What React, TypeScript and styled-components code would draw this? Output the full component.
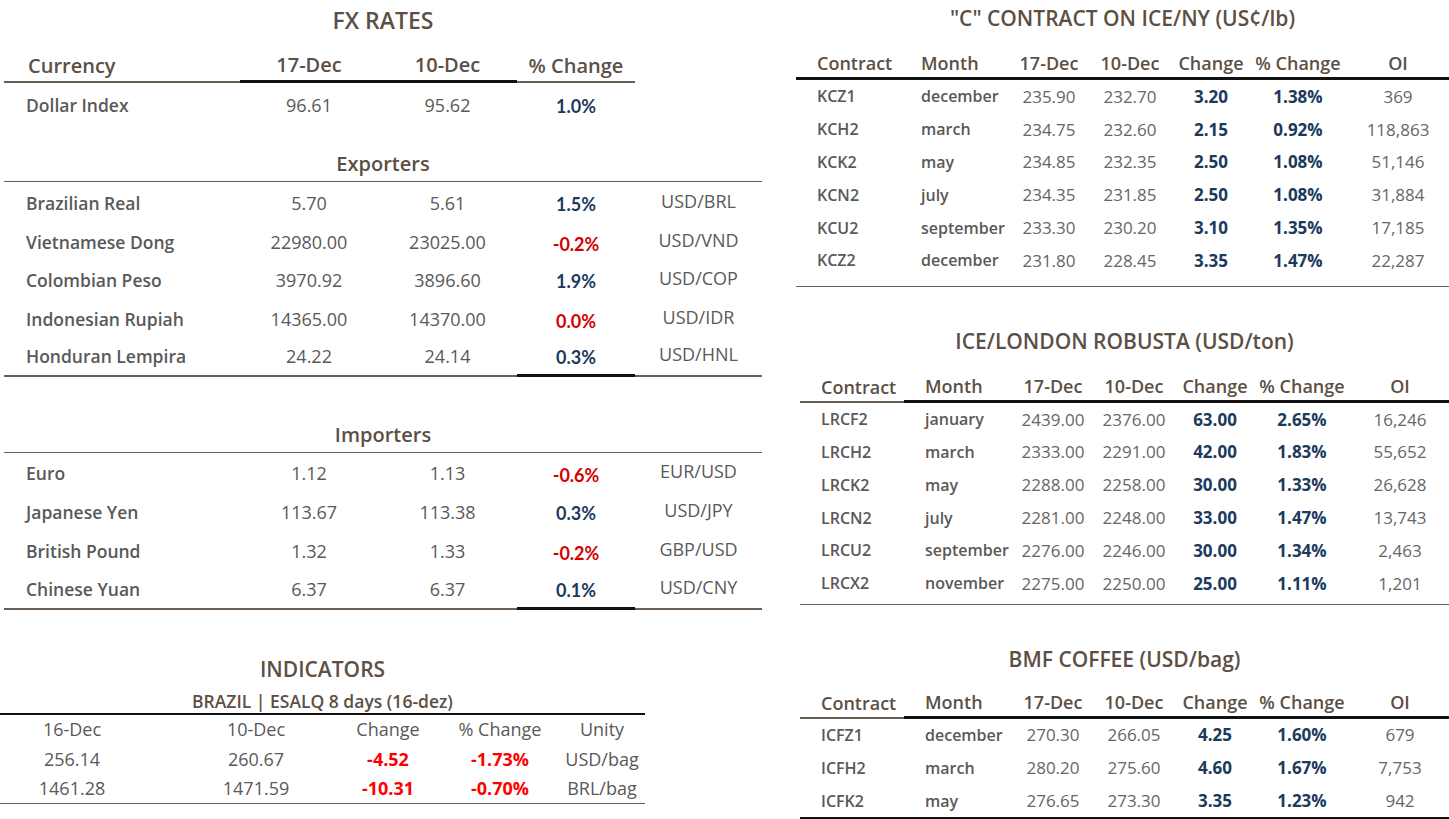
import React from 'react';
import styled, { createGlobalStyle } from 'styled-components';

const BROWN = '#5c4f45';
const RULE = '#6b5e53';
const INK = '#595959';
const SOFT = '#666666';
const BLUE = '#1b3a5c';
const RED = '#d40000';
const HOT = '#ff0000';

const GlobalStyle = createGlobalStyle`
  html, body {
    margin: 0;
    padding: 0;
    background: #ffffff;
  }
  body {
    font-family: 'Open Sans', 'Liberation Sans', sans-serif;
    color: ${INK};
    overflow: hidden;
  }
`;

const Page = styled.div`
  display: grid;
  grid-template-columns: 766px 653px;
  column-gap: 30px;
  align-items: start;
  width: 1449px;
  height: 819px;
`;

const Column = styled.div`
  display: flex;
  flex-direction: column;
`;

/* ---------- FX RATES ---------- */

const FxBlock = styled.section`
  width: 758px;
  margin: 0 4px;
  display: flex;
  flex-direction: column;
`;

const BigTitle = styled.h2<{ $h: number; $size?: number }>`
  margin: 0;
  height: ${p => p.$h}px;
  line-height: ${p => p.$h}px;
  text-align: center;
  font-size: ${p => p.$size ?? 23}px;
  font-weight: 600;
  color: ${BROWN};
  white-space: nowrap;
`;

const FX_COLS = '236px 138px 139px 118px 127px';

const FxHead = styled.div`
  display: grid;
  grid-template-columns: ${FX_COLS};
  height: 43px;
`;

const FxHeadCell = styled.div<{ $rule: string; $w: number; $left?: boolean }>`
  display: flex;
  align-items: flex-end;
  justify-content: ${p => (p.$left ? 'flex-start' : 'center')};
  padding: 0 0 2px ${p => (p.$left ? '24px' : '0')};
  border-bottom: ${p => p.$w}px solid ${p => p.$rule};
  font-size: 20px;
  font-weight: 600;
  line-height: 26px;
  color: ${BROWN};
  white-space: nowrap;
`;

const SectionTitle = styled.h3<{ $gap: number }>`
  margin: ${p => p.$gap}px 0 0;
  height: 33px;
  box-sizing: border-box;
  line-height: 30px;
  text-align: center;
  font-size: 20px;
  font-weight: 600;
  color: ${BROWN};
  border-bottom: 1px solid ${RULE};
`;

const FxRows = styled.div<{ $top: number }>`
  padding-top: ${p => p.$top}px;
  display: flex;
  flex-direction: column;
`;

const FxRow = styled.div<{ $h: number }>`
  display: grid;
  grid-template-columns: ${FX_COLS};
  height: ${p => p.$h}px;
`;

const FxCell = styled.div<{ $rule?: string; $w?: number }>`
  display: flex;
  align-items: center;
  justify-content: center;
  box-sizing: border-box;
  border-bottom: ${p => (p.$rule ? `${p.$w ?? 2}px solid ${p.$rule}` : 'none')};
  white-space: nowrap;
`;

const FxName = styled(FxCell)`
  justify-content: flex-start;
  padding-left: 22px;
  font-size: 17.5px;
  font-weight: 600;
  color: ${INK};
`;

const FxNum = styled(FxCell)`
  font-size: 18px;
  font-weight: 400;
  color: ${INK};
`;

const FxPct = styled(FxCell)<{ $down?: boolean }>`
  font-family: Lato, 'Open Sans', sans-serif;
  font-size: 18px;
  font-weight: 700;
  color: ${p => (p.$down ? RED : BLUE)};
  padding-top: ${p => (p.$down ? '4px' : '2px')};
`;

const FxPair = styled(FxCell)`
  font-size: 18px;
  font-weight: 400;
  color: ${INK};
  padding-bottom: 4px;
`;

type FxItem = { name: string; now: string; prev: string; pct: string; down?: boolean; pair?: string };

const exporters: FxItem[] = [
  { name: 'Brazilian Real', now: '5.70', prev: '5.61', pct: '1.5%', pair: 'USD/BRL' },
  { name: 'Vietnamese Dong', now: '22980.00', prev: '23025.00', pct: '-0.2%', down: true, pair: 'USD/VND' },
  { name: 'Colombian Peso', now: '3970.92', prev: '3896.60', pct: '1.9%', pair: 'USD/COP' },
  { name: 'Indonesian Rupiah', now: '14365.00', prev: '14370.00', pct: '0.0%', down: true, pair: 'USD/IDR' },
  { name: 'Honduran Lempira', now: '24.22', prev: '24.14', pct: '0.3%', pair: 'USD/HNL' },
];

const importers: FxItem[] = [
  { name: 'Euro', now: '1.12', prev: '1.13', pct: '-0.6%', down: true, pair: 'EUR/USD' },
  { name: 'Japanese Yen', now: '113.67', prev: '113.38', pct: '0.3%', pair: 'USD/JPY' },
  { name: 'British Pound', now: '1.32', prev: '1.33', pct: '-0.2%', down: true, pair: 'GBP/USD' },
  { name: 'Chinese Yuan', now: '6.37', prev: '6.37', pct: '0.1%', pair: 'USD/CNY' },
];

function FxLine({ item, h, last }: { item: FxItem; h: number; last?: boolean }) {
  const brown = last ? RULE : undefined;
  const black = last ? '#111111' : undefined;
  return (
    <FxRow $h={h}>
      <FxName $rule={brown}>{item.name}</FxName>
      <FxNum $rule={brown}>{item.now}</FxNum>
      <FxNum $rule={brown}>{item.prev}</FxNum>
      <FxPct $rule={black} $w={3} $down={item.down}>{item.pct}</FxPct>
      <FxPair $rule={brown}>{item.pair}</FxPair>
    </FxRow>
  );
}

/* ---------- INDICATORS ---------- */

const IndBlock = styled.section`
  width: 645px;
  margin-top: 43px;
  display: flex;
  flex-direction: column;
`;

const SubTitle = styled.div`
  padding-top: 4px;
  line-height: 24px;
  text-align: center;
  font-size: 17.5px;
  font-weight: 600;
  color: ${BROWN};
  border-bottom: 2px solid #111111;
`;

const IndRows = styled.div`
  display: flex;
  flex-direction: column;
  border-bottom: 1.5px solid ${RULE};
`;

const IndRow = styled.div`
  display: grid;
  grid-template-columns: 144px 224px 40px 184px 20px;
  height: 29.5px;
`;

const IndCell = styled.div<{ $hot?: boolean }>`
  display: flex;
  align-items: center;
  justify-content: center;
  white-space: nowrap;
  font-size: 18px;
  font-weight: ${p => (p.$hot ? 700 : 400)};
  color: ${p => (p.$hot ? HOT : INK)};
`;

const indicators = [
  ['256.14', '260.67', '-4.52', '-1.73%', 'USD/bag'],
  ['1461.28', '1471.59', '-10.31', '-0.70%', 'BRL/bag'],
];

/* ---------- FUTURES TABLES ---------- */

const FutBlock = styled.section<{ $gap: number; $inset: number }>`
  margin: ${p => p.$gap}px 0 0 ${p => p.$inset}px;
  display: flex;
  flex-direction: column;
`;

const FUT_COLS = '104px 111px 76px 86px 76px 98px 1fr';

const FutHead = styled.div<{ $h: number }>`
  display: grid;
  grid-template-columns: ${FUT_COLS};
  height: ${p => p.$h}px;
`;

const FutHeadCell = styled.div<{ $left?: boolean; $rule?: string }>`
  display: flex;
  align-items: flex-end;
  justify-content: ${p => (p.$left ? 'flex-start' : 'center')};
  padding: 0 0 1px ${p => (p.$left ? '21px' : '0')};
  border-bottom: ${p => (p.$rule ? `2px solid ${p.$rule}` : '3px solid #111111')};
  font-size: 18px;
  font-weight: 600;
  line-height: 26px;
  color: ${BROWN};
  white-space: nowrap;
`;

const FutRows = styled.div<{ $pad: number; $rule: string; $w: number }>`
  display: flex;
  flex-direction: column;
  padding-bottom: ${p => p.$pad}px;
  border-bottom: ${p => p.$w}px solid ${p => p.$rule};
`;

const FutRow = styled.div`
  display: grid;
  grid-template-columns: ${FUT_COLS};
  height: 32.8px;
`;

const FutCell = styled.div`
  display: flex;
  align-items: center;
  justify-content: center;
  white-space: nowrap;
  font-size: 17px;
  font-weight: 400;
  color: ${SOFT};
`;

const FutText = styled(FutCell)`
  justify-content: flex-start;
  padding-left: 21px;
  font-size: 16px;
  font-weight: 600;
  color: ${INK};
`;

const FutMove = styled(FutCell)`
  font-weight: 700;
  color: ${BLUE};
`;

type Fut = [string, string, string, string, string, string, string];

const kc: Fut[] = [
  ['KCZ1', 'december', '235.90', '232.70', '3.20', '1.38%', '369'],
  ['KCH2', 'march', '234.75', '232.60', '2.15', '0.92%', '118,863'],
  ['KCK2', 'may', '234.85', '232.35', '2.50', '1.08%', '51,146'],
  ['KCN2', 'july', '234.35', '231.85', '2.50', '1.08%', '31,884'],
  ['KCU2', 'september', '233.30', '230.20', '3.10', '1.35%', '17,185'],
  ['KCZ2', 'december', '231.80', '228.45', '3.35', '1.47%', '22,287'],
];

const robusta: Fut[] = [
  ['LRCF2', 'january', '2439.00', '2376.00', '63.00', '2.65%', '16,246'],
  ['LRCH2', 'march', '2333.00', '2291.00', '42.00', '1.83%', '55,652'],
  ['LRCK2', 'may', '2288.00', '2258.00', '30.00', '1.33%', '26,628'],
  ['LRCN2', 'july', '2281.00', '2248.00', '33.00', '1.47%', '13,743'],
  ['LRCU2', 'september', '2276.00', '2246.00', '30.00', '1.34%', '2,463'],
  ['LRCX2', 'november', '2275.00', '2250.00', '25.00', '1.11%', '1,201'],
];

const bmf: Fut[] = [
  ['ICFZ1', 'december', '270.30', '266.05', '4.25', '1.60%', '679'],
  ['ICFH2', 'march', '280.20', '275.60', '4.60', '1.67%', '7,753'],
  ['ICFK2', 'may', '276.65', '273.30', '3.35', '1.23%', '942'],
];

interface FuturesProps {
  title: string;
  rows: Fut[];
  gap: number;
  inset: number;
  headH: number;
  firstRule?: string;
  pad: number;
  endRule: string;
  endW: number;
}

function Futures({ title, rows, gap, inset, headH, firstRule, pad, endRule, endW }: FuturesProps) {
  return (
    <FutBlock $gap={gap} $inset={inset}>
      <BigTitle $h={36} $size={21}>{title}</BigTitle>
      <FutHead $h={headH}>
        <FutHeadCell $left $rule={firstRule}>Contract</FutHeadCell>
        <FutHeadCell $left>Month</FutHeadCell>
        <FutHeadCell>17-Dec</FutHeadCell>
        <FutHeadCell>10-Dec</FutHeadCell>
        <FutHeadCell>Change</FutHeadCell>
        <FutHeadCell>% Change</FutHeadCell>
        <FutHeadCell>OI</FutHeadCell>
      </FutHead>
      <FutRows $pad={pad} $rule={endRule} $w={endW}>
        {rows.map(r => (
          <FutRow key={r[0]}>
            <FutText>{r[0]}</FutText>
            <FutText>{r[1]}</FutText>
            <FutCell>{r[2]}</FutCell>
            <FutCell>{r[3]}</FutCell>
            <FutMove>{r[4]}</FutMove>
            <FutMove>{r[5]}</FutMove>
            <FutCell>{r[6]}</FutCell>
          </FutRow>
        ))}
      </FutRows>
    </FutBlock>
  );
}

export default function App() {
  return (
    <>
      <GlobalStyle />
      <Page>
        <Column>
          <FxBlock>
            <BigTitle $h={40}>FX RATES</BigTitle>
            <FxHead>
              <FxHeadCell $left $rule={RULE} $w={2}>Currency</FxHeadCell>
              <FxHeadCell $rule="#111111" $w={3}>17-Dec</FxHeadCell>
              <FxHeadCell $rule="#111111" $w={3}>10-Dec</FxHeadCell>
              <FxHeadCell $rule={RULE} $w={2}>% Change</FxHeadCell>
            </FxHead>
            <FxLine h={44} item={{ name: 'Dollar Index', now: '96.61', prev: '95.62', pct: '1.0%' }} />

            <SectionTitle $gap={22}>Exporters</SectionTitle>
            <FxRows $top={2}>
              {exporters.map((e, i) => (
                <FxLine key={e.name} h={38.5} item={e} last={i === exporters.length - 1} />
              ))}
            </FxRows>

            <SectionTitle $gap={43}>Importers</SectionTitle>
            <FxRows $top={1}>
              {importers.map((e, i) => (
                <FxLine key={e.name} h={39} item={e} last={i === importers.length - 1} />
              ))}
            </FxRows>
          </FxBlock>

          <IndBlock>
            <BigTitle $h={32} $size={21}>INDICATORS</BigTitle>
            <SubTitle>BRAZIL | ESALQ 8 days (16-dez)</SubTitle>
            <IndRows>
              <IndRow>
                <IndCell>16-Dec</IndCell>
                <IndCell>10-Dec</IndCell>
                <IndCell>Change</IndCell>
                <IndCell>% Change</IndCell>
                <IndCell>Unity</IndCell>
              </IndRow>
              {indicators.map(r => (
                <IndRow key={r[4]}>
                  <IndCell>{r[0]}</IndCell>
                  <IndCell>{r[1]}</IndCell>
                  <IndCell $hot>{r[2]}</IndCell>
                  <IndCell $hot>{r[3]}</IndCell>
                  <IndCell>{r[4]}</IndCell>
                </IndRow>
              ))}
            </IndRows>
          </IndBlock>
        </Column>

        <Column>
          <Futures
            title={'"C" CONTRACT ON ICE/NY (US¢/lb)'}
            rows={kc}
            gap={0}
            inset={0}
            headH={44}
            pad={9}
            endRule={RULE}
            endW={1.5}
          />
          <Futures
            title="ICE/LONDON ROBUSTA (USD/ton)"
            rows={robusta}
            gap={36}
            inset={4}
            headH={44}
            firstRule={RULE}
            pad={4}
            endRule={RULE}
            endW={1.5}
          />
          <Futures
            title="BMF COFFEE (USD/bag)"
            rows={bmf}
            gap={36}
            inset={4}
            headH={42}
            firstRule={RULE}
            pad={0}
            endRule="#111111"
            endW={2}
          />
        </Column>
      </Page>
    </>
  );
}
